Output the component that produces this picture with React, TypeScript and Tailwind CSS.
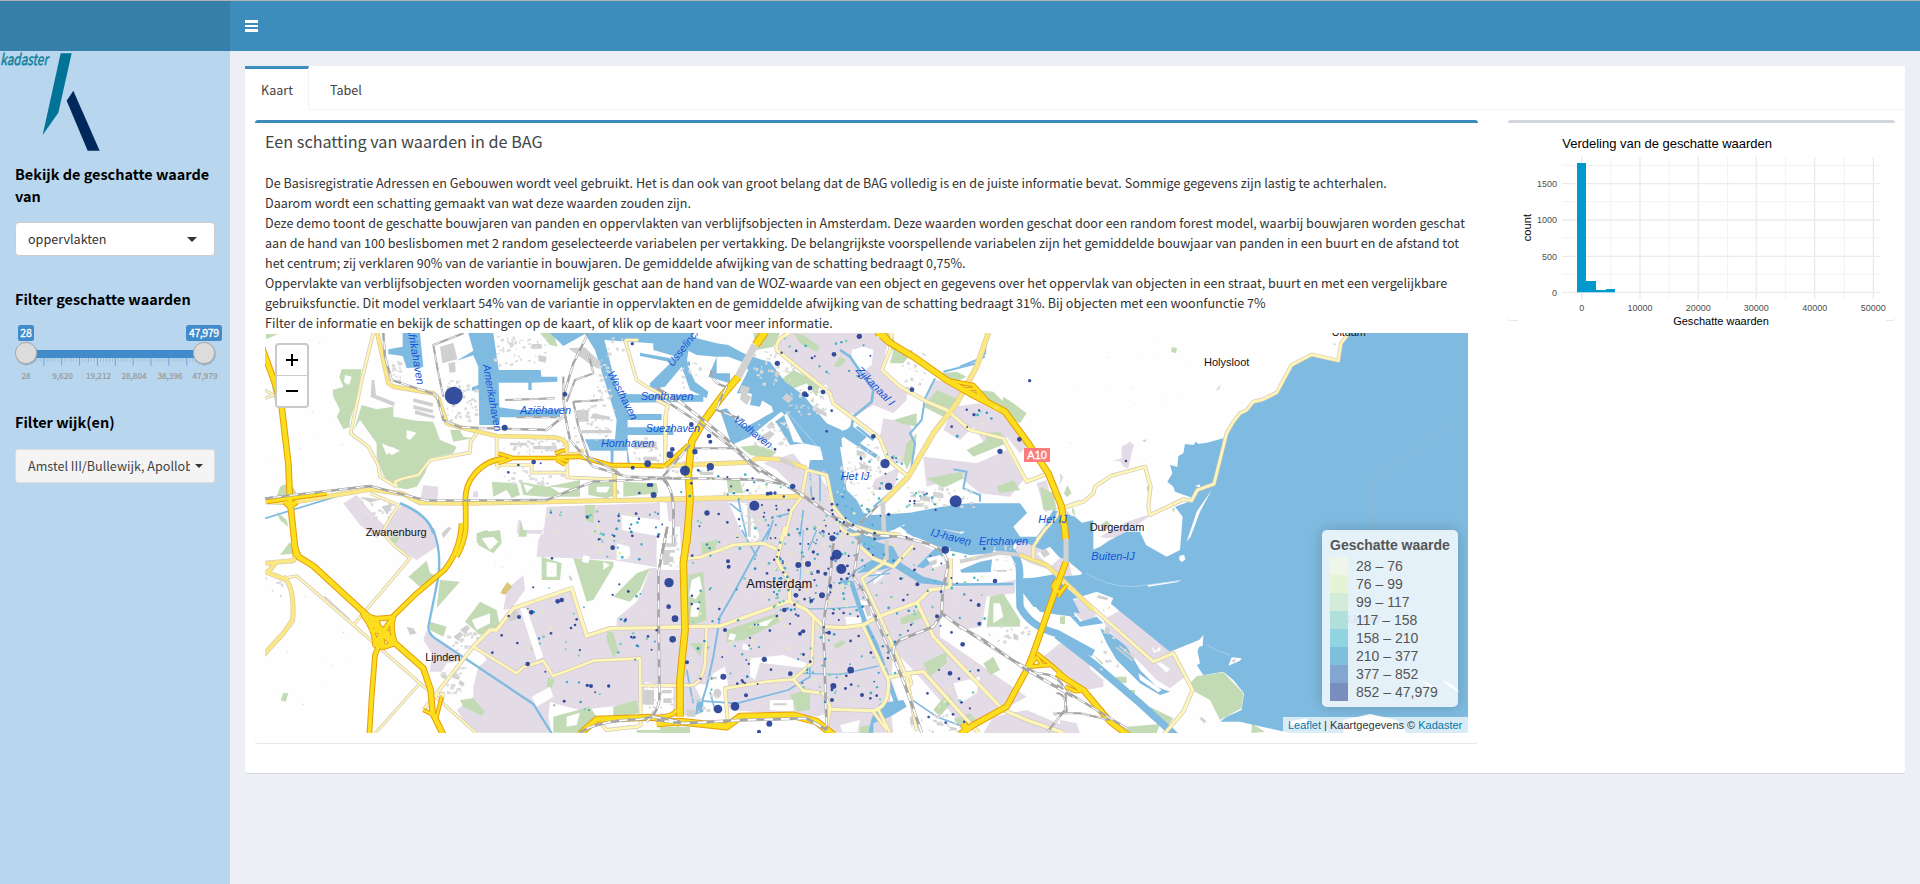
import React from 'react';

type Road = [string, number];
type Tile = {
  x: number;
  y: number;
  urban?: string;
  green?: string;
  water?: string;
  land?: string;
  canals?: Road[];
  minor?: Road[];
  main?: Road[];
  motorway?: Road[];
  rail?: Road[];
  blocks?: string;
  dots?: number[][];
};

// The map is split in tiles; every path is written in its tile's own units (3 per pixel).
const tiles: Tile[] = [
  {
    x: 0, y: 0,
    urban: 'M250 520L290 495 345 560 380 592 350 625 300 585Z M395 560L430 520 470 540 525 600 530 650 470 690 390 640 360 600Z M490 465L535 470 532 512 480 512Z M640 485l14-3v20h-16Z M860 530L1300 515 1300 730 1060 690 830 680 835 630 855 590 775 570 770 610 850 612Z',
    green: 'M245 118L305 118 300 150 290 210 270 270 268 292 250 298 230 260 240 240 220 200 218 180 250 170 238 140Z M305 225L350 238 400 230 400 260 470 272 520 275 540 330 590 350 580 370 510 385 495 430 470 470 440 478 400 470 370 435 350 380 350 340 300 270 282 300Z M570 300L600 300 610 320 640 325 580 335Z M840 9L880 9 893 50 870 45Z M695 455L770 460 780 495 755 505 740 480 700 500Z M780 455L860 470 960 450 960 500 850 500 790 495Z M985 460L1060 455 1080 490 1040 505 985 495Z M1090 455L1190 460 1195 490 1090 500Z M60 470L90 455 110 490 50 500Z M50 545L80 570 85 590 60 570Z M650 610L680 600 720 630 650 640Z M18 12l36 0-36 16Z M35 165l30 50 0 20-20-20Z M975 525L1005 525 1000 580 975 570Z M785 560L800 530 800 620 775 620Z',
    water: 'M428 9L480 9 490 112 440 114 428 78 385 72 385 58 428 50Z M625 9L700 9 716 120 842 120 844 140 892 140 892 155 815 158 815 180 805 180 805 158 716 158 718 232 780 240 900 238 900 262 720 262 718 285 658 285 656 180 635 182 636 172 655 165 655 110 640 76 590 92 640 62Z M870 9L1300 9 1300 60 1250 45 1033 30 1075 192 1330 195 1330 215 1100 218 1103 252 1205 252 1205 270 1103 270 1103 292 1240 292 1240 315 1103 315 1103 362 1110 405 1103 405 1100 362 1061 362 1060 400 1052 400 1052 362 990 362 975 328 1065 328 1070 270 1005 60 975 12 910 48Z M1140 68L1290 95 1290 108 1140 78Z M1240 90L1270 100 1205 170 1185 160Z',
    land: 'M440 300l30 8-20 22-10-5Z M395 350l25 12-25 14-10-10Z M255 135l20 5-8 25-15-8Z M365 340l35 15-20 20Z M790 462l30 8-20 18Z M870 470l60 5-30 14Z M1010 470l40 0-10 18-30-2Z M1085 555L1240 575 1235 625 1085 600Z M775 535L820 530 855 560 850 600 790 600Z',
    canals: [['M15 565L260 490', 5], ['M420 520C470 540 510 570 520 610', 8]],
    blocks: 'M540 50l40-12 12 50-45 12Z M565 100l20-5 2 30-18 4Z M335 150l8 0 5 45 56 22-2 12-70-28Z M460 205l60 15-2 10-58-14Z M460 225l60 15-2 10-58-14Z M465 240l60 18-2 8-58-14Z M950 240h36v35h-36Z M1000 250l50 10v10l-60-5Z M925 55l50-3 20 20 28 25-6 20-20-10Z M815 42h30v14h-30Z M835 75l25 5-3 18-22-5Z M965 300h90v10h-90Z M750 338h50v8h-50Z M820 348h70v10h-70Z M1120 330l70 5v20h-70Z M365 530l35-10-18 35Z M1150 380h40v12h-40Z M300 500l60 8-30 10Z',
    minor: [
      ['M340 9L305 150 272 310 325 350 355 405 360 440 410 470', 7],
      ['M410 470L405 455 430 445 475 435 510 390 630 368 632 335 650 310', 7],
      ['M15 205l25-10-25-15', 5],
      ['M710 320V410M710 415L720 405H815V428H920V442L1060 448M922 395V440', 7],
      ['M1095 30L1130 150 1160 170 1240 210', 7],
      ['M1095 30H1135', 7],
      ['M330 490L415 525 370 600 385 630', 6],
      ['M1225 225L1215 260V405', 7],
    ],
    main: [
      ['M352 9L385 160 400 170 520 190 535 205 560 280 600 292 710 318 880 322Q915 325 920 345V400', 10],
      ['M922 372H950L970 360', 9],
      ['M15 515L90 518 330 478 430 492 480 518 620 520 1260 508 1640 498', 11],
      ['M1064 405V508', 10],
    ],
    motorway: [
      ['M5 50L45 160 65 230 85 400 90 510 108 680', 17],
      ['M20 515L90 505 200 490', 12],
      ['M75 515L90 530 110 515', 16],
      ['M735 385Q680 390 645 430 T617 530 V600 Q612 640 590 680', 14],
      ['M715 370L760 384H890L925 395M715 400L760 384M885 370L915 360M890 390L915 405', 10],
      ['M890 382L960 380 1050 405 1210 408', 12],
    ],
    rail: [
      ['M370 9L375 80 395 150 530 195 550 270 600 292 860 300 915 255 910 200 940 100 985 9', 6],
      ['M610 10L520 45 535 130 550 200', 5],
      ['M735 210L885 205M770 262L890 262M910 210V140M920 215L945 150 1000 130 985 70M940 215L1030 210', 5],
      ['M915 255L930 330 1000 410 1100 440 1260 445', 6],
      ['M15 505L330 468 500 512 860 510 1000 455 1210 445', 6],
      ['M940 215L955 290 985 380 1080 430', 5],
      ['M1210 445Q1240 470 1240 560', 6],
    ],
    dots: [[581, 197, 27], [734, 293, 9], [915, 193, 7], [821, 396, 7], [1163, 401, 10], [1118, 413, 6], [1181, 495, 9], [1166, 465, 6], [1174, 465, 6], [1230, 374, 10], [1237, 358, 7], [1117, 41, 5], [1138, 489, 4], [775, 405, 4], [745, 427, 4], [842, 400, 3]],
  },
  {
    x: 1200, y: 0,
    urban: 'M-10 505L300 505 420 500 400 470 350 420 310 400 400 370 440 420 480 440 500 470 515 540 560 590 640 630 640 700-10 700Z M370 9L690 9 665 120 740 180 740 210 700 250 640 225 590 255 530 235 515 205 500 165 460 160 400 110 350 65 350 50Z M670 265L750 280 760 320 730 400 700 400 680 360 660 320Z M825 150L880 160 920 185 900 200 860 245 790 215 810 165Z M880 230L960 220 1040 260 1100 350 1080 370 1040 320 980 350 940 290 900 330 850 300Z M790 380L950 400 1040 360 1090 450 1050 500 960 490 900 440 800 470Z M640 450L720 410 700 480 640 480Z M1130 460l30-10 20 90-25 5Z',
    green: 'M280 9L360 9 340 50 290 60Z M400 9L430 15 480 50 470 65 420 40Z M350 160L400 120 480 160 470 200 440 160 390 180Z M520 110L540 80 560 90 540 110Z M700 60L760 60 730 100 690 100Z M790 230L830 180 900 210 850 260 780 225Z M840 130L890 125 920 140 880 160 850 150Z M970 310L1020 305 1040 340 940 380 920 360 980 330Z M800 445L905 425 910 445 850 475Z M700 270L770 250 770 290 720 280Z M740 340L770 310 765 370 740 420 730 390Z M1030 200L1060 220 1100 250 1080 280 1020 250Z M1140 470L1180 490 1190 540 1150 540Z M1010 470L1060 450 1080 480 1020 490Z M960 180l40 5 40 40-10 10-50-30Z M200 445L240 450 250 490 205 490Z M670 9L700 20 710 60 690 60Z M240 350l50-5 60 20-20 20-60-10Z',
    water: 'M-20 9L50 9 170 40 205 45 250 70 300 88 330 95 375 155 430 195 500 280 545 300 545 340 560 430 575 480 610 548 640 555 750 548 900 520 1080 520 1110 560 1080 590 1095 610 1150 590 1180 540 1245 560 1290 600 1290 720 1100 640 1040 640 1030 600 900 605 740 580 700 600 650 610 590 590 550 560 520 520 500 430 480 440 445 420 450 390 490 390 480 350 430 340 400 335 370 250 270 190 230 190 265 120 245 95 205 80 170 80 170 130 210 130 210 160 145 140 170 80 110 75 85 62 80 100 105 155 145 185 140 205 90 180 65 110 15 170-30 180-30 160 50 80-20 60Z M230 190L265 130 280 140 265 190Z M280 175L315 185 300 230 270 225Z M335 230L370 240 270 320 215 345 180 240 200 235 235 280 260 290 340 245Z M350 280L390 345 430 340 380 250 345 275Z M540 305L580 290 620 320 600 340 560 325Z M560 600L620 570 720 620 600 640Z M720 590L760 580 920 615 900 640 760 620Z',
    land: 'M575 60L610 50 640 60 635 105 610 125 575 90Z M540 350L620 370 660 400 640 460 600 520 560 480Z M740 500L900 460 960 490 960 515 880 525 750 540Z M1060 590L1120 530 1160 580 1130 620 1080 620Z M0 512L20 520 30 620 0 625Z M205 515L260 520 300 620 280 640 250 620Z',
    canals: [
      ['M540 60L570 80 640 180 635 215 580 260 575 290 540 325', 8],
      ['M545 310L650 380', 12], ['M590 290L640 330', 8],
      ['M980 9L975 70 950 100 850 125M975 80L950 90 900 110', 6],
      ['M825 145L795 205 785 270 750 310 765 340 750 440 640 530', 6],
      ['M880 418L920 425 910 475 960 495V515', 6],
      ['M450 430L455 510M480 440V520M430 540L420 620M235 510L260 620M210 520L240 545M340 570L320 630', 5],
      ['M350 560L390 550', 5],
    ],
    blocks: 'M245 165l25 8-8 20-25-8Z M245 185l30 15-15 25-20-18Z M760 520h30v10h-30Z M780 495l30 6v14l-30-4Z M820 485l30 6v14l-30-4Z M590 360l24 6v14l-24-4Z M600 400l25 6v14l-25-4Z M300 320l30-18 14 10-30 30Z M320 290l14-16 10 10-14 14Z M380 190l20 15-14 15-20-15Z M262 530h10v90h-8Z M470 230l30 20v10l-40-18Z M120 425h40v10h-40Z M350 120l10 8-8 16-10-8Z M740 170l20 10-14 14-14-10Z',
    minor: [
      ['M390 9Q345 25 350 60L510 190 520 220 660 325 685 390 745 440', 9],
      ['M665 120L720 170 800 215 860 240 930 300 1030 325 1100 455 1165 430', 9],
      ['M665 120L690 60 695 9', 8],
      ['M440 420L500 435 520 530 560 580 640 605 720 615', 8],
      ['M440 420L425 500 395 540 375 620', 8],
      ['M20 225L15 405M20 225L-10 210', 7],
      ['M1130 630L1190 560 1200 535 1260 515', 6],
    ],
    main: [
      ['M985 9L950 110 890 220 820 310 745 440 670 515', 13],
      ['M-10 408L270 397 290 385 360 388 440 415', 11],
      ['M-5 508L200 503 420 500', 11],
      ['M1165 430L1200 520', 10],
    ],
    motorway: [
      ['M316 5L287 45', 22],
      ['M235 140L185 200 130 275 95 335 85 430 90 510 80 640', 20],
      ['M15 408L85 345', 11],
      ['M650 5L685 35 760 80 860 150 930 190 1035 245 1105 340 1165 430 1205 530 1218 630', 18],
      ['M670 9l25 30M900 180L950 175 960 205M860 150L940 165 985 215', 11],
    ],
    rail: [
      ['M-10 175L60 215 180 310 300 420 420 490 520 560 640 620', 8],
      ['M-10 195L120 280 250 380 340 440 460 520', 6],
      ['M100 355H220L300 430', 5],
      ['M-10 445L130 445 300 450 380 465', 6],
      ['M10 450Q45 480 40 560V640', 6],
      ['M155 120Q150 160 200 170L180 210 170 240 250 270', 6],
      ['M600 580L660 520', 6],
      ['M90 345L0 450', 6],
    ],
    dots: [[598, 19, 8], [522, 73, 7], [456, 84, 4], [352, 100, 8], [450, 174, 7], [489, 186, 7], [434, 192, 8], [440, 196, 6], [756, 179, 7], [942, 254, 5], [1109, 152, 5], [1078, 328, 7], [1020, 364, 8], [640, 319, 7], [675, 401, 14], [686, 469, 11], [887, 514, 18], [283, 527, 15], [141, 549, 8], [75, 422, 15], [151, 410, 11], [147, 318, 7], [151, 335, 6], [105, 365, 8], [94, 283, 7], [398, 469, 8], [323, 491, 6], [332, 490, 6], [345, 489, 5], [202, 577, 4], [176, 552, 4], [686, 553, 5], [603, 386, 4], [115, 421, 4], [552, 577, 4], [500, 304, 4], [515, 242, 4], [345, 358, 4], [875, 290, 4]],
  },
  {
    x: 2400, y: 0,
    urban: 'M185 350L210 335 222 345 215 370 205 415 190 410 180 393 158 393 185 385Z M200 575L262 555 265 562 210 600 180 620 140 625 120 620Z M0 430l10 10-10 25Z M0 535l20 5 28 35-30 0Z',
    green: 'M335 52l16 2-3 16-14-4Z M470 178l12-14-4 12-10 6Z M12 490L22 465 35 490 20 502Z M120 585L140 572 155 585 130 605Z M245 332l14-4-2 8Z M335 535l10 0-4 14Z M35 530l8 10 2 20-8-12Z M260 470l8-5 0 18-6 2Z M780 74l10 0-6 5Z M820 38l8 5-6 4Z',
    water: 'M864 9L1224 9 1224 1209 690 1209 540 1175 480 1175 500 1160 545 1140 552 1090 520 1050 490 1025 430 1035 400 990 430 925 330 965 175 840 110 785 30 810 45 860 0 855-60 845-110 790-115 745 0 740 60 735 68 730 20 690 0 680 0 590 25 610 85 665 120 650 150 630 200 605 240 605 258 645 320 680 360 660 368 560 345 530 395 512 412 480 462 462 500 310 540 250 580 215 650 188 695 105 755 74 835 92 843 40Z M490 325L440 338 415 342 408 335 400 345 375 342 370 370 355 378 352 410 330 405 337 430 322 455 340 470 345 485 400 505 412 480 462 462Z',
    land: 'M455 480L410 545 380 635 392 620 420 545Z M405 468l15-5 0 10Z',
    minor: [
      ['M-10 540L70 515 100 490 105 470 155 437 255 410 272 470 265 530 270 555 370 508 395 512 412 480 462 462 500 310 520 275 540 250 560 240 580 215 605 210 650 188 695 105 755 74 835 92 843 40 865 12', 8],
    ],
    dots: [[198, 393, 4]],
  },
  {
    x: 0, y: 600,
    urban: 'M490 330L500 300 520 325 620 390 560 400 545 425 510 425 515 370Z M640 470L655 410 680 390 650 345 700 300 760 240 940 175 980 318 1070 300 1070 265 1130 215 1150 170 1170 115 1240 110 1240 530 1140 520 960 540 900 525 870 515 865 560 875 608 640 608 590 540 640 500Z M740 180L790 135 795 180 755 235 730 240Z',
    green: 'M445 140L500 92 510 130 540 140 480 170Z M540 150L600 155 560 200 530 235Z M510 275L560 290 550 320 510 300Z M615 275L660 215 710 240 720 290 660 315Z M600 510L640 505 675 545 665 558 610 530Z M60 75L90 35 110 70Z M70 488l15 2-8 25-15-4Z M940 85L1060 95 1060 110 1000 210 980 215Z M1060 200L1130 130 1170 115 1140 180 1110 215Z M1040 300L1060 310 1075 360 1060 385 1040 330Z M880 560L990 530 1010 560 960 608 880 608Z M1060 530L1130 510 1140 550 1060 560Z M845 80L905 100 900 150 845 150Z M650 10L720 0 725 40 700 70 655 45Z M1130 600h120v8h-120Z M820 340l10-8-6 30-14-2Z M865 440l20 10-10 25-15-5Z M395 20l25 0-10 20-20-5Z',
    land: 'M635 270L690 250 690 280 650 300Z M665 25L700 20 715 35 690 60Z M920 560L960 548 950 585 920 590Z M780 235L800 235 850 380 830 390Z M1070 40L1110 50 1110 85 1070 90Z M1155 455L1240 475 1240 550 1150 550Z M815 500L870 470 880 500 830 530Z M1030 95l20 10-20 15Z M970 75l20 5-5 20-20-5Z M860 95l30 5v40l-30 0Z M1000 545l40 5-20 15Z',
    canals: [['M518 -5Q545 60 535 140L505 290Q505 310 525 325L820 522 875 610', 7]],
    blocks: 'M440 290l20 5 10 15-20 5Z M580 320l20-15 10 8-15 20Z M600 300l20-15 10 8-15 20Z M580 430l20 10-5 10-20-8Z M600 450l14 10-5 10-14-8Z M1150 480h32v44h-32Z M740 255l30-15 10 20-30 15Z M930 135l8 14-6 4-6-12Z M1210 60l20 5-2 40-18 0Z M545 10l20-20 10 5-25 30Z M195 198l75 68-3 3-76-68Z M545 430l16 6-4 12-14-6Z',
    minor: [
      ['M370 10L400 45 450 85 280 285', 6],
      ['M70 145L110 138 280 285 480 460 650 610', 6],
      ['M480 460L345 610', 5],
      ['M490 540L640 350 770 430 790 412 850 392 880 438 1000 392 1140 385 1142 585Q1135 592 1110 592L1040 600 1015 570', 8],
      ['M640 350L690 300 710 300 760 235 935 175 980 318 1050 295 1260 292', 10],
      ['M1140 467H1260', 7],
      ['M520 500L550 490 545 520', 6],
    ],
    main: [['M15 100L100 92 118 65M15 125L75 148M25 125L50 95M70 140Q105 170 98 270 L70 310 10 375', 11]],
    motorway: [
      ['M100 40L115 80 160 108 320 255 400 335 490 415 512 480 518 550 550 615', 17],
      ['M605 -20Q600 60 555 118L470 190 400 258 375 300 345 375 335 500 328 615', 14],
      ['M310 255L350 266 400 262Q390 290 405 340L370 352 345 345Q345 300 310 255Z M330 275L395 340 M345 340L390 275 M330 300L390 310M350 265L370 350', 14],
      ['M490 540L530 560 545 500', 10],
      ['M960 612L1010 568 1180 562 1260 580', 18],
      ['M1250 540Q1240 560 1190 562', 12],
    ],
    rail: [['M960 608Q1010 572 1140 568L1180 560 1260 575', 7], ['M1222 -10L1195 130 1198 510 Q1195 545 1160 575', 7]],
    dots: [[1058, 53, 7], [1227, 158, 14], [1226, 230, 7], [1245, 266, 10], [1238, 328, 10], [905, 210, 7], [893, 214, 7], [814, 247, 7], [777, 261, 6], [803, 402, 7], [982, 466, 5], [993, 468, 6], [1046, 468, 5], [725, 316, 4], [772, 339, 4], [697, 368, 4], [873, 310, 4], [950, 268, 4], [945, 285, 4], [933, 294, 4], [1097, 269, 4], [1114, 321, 4], [1164, 319, 4], [856, 425, 3], [746, 258, 4], [1123, 322, 4], [876, 85, 4]],
  },
  {
    x: 1200, y: 600,
    urban: 'M-10-10H650L740 20 840 70 870 110 880 170 980 165 1065 150 1065 190 980 200 965 290 900 300 850 250 840 250 840 320 1100 500 1030 540 910 590 760 420 700 360 690 520 700 608 510 608 500 550 470 560 210 540 190 470 100 460 130 520 110 550 0 570Z M1000 560L1100 540 1240 600 1230 610 970 610Z M1150 380L1200 340 1290 380 1290 460 1230 440Z M1110 100L1060 70 1080 20 1130 0 1210 30 1250 190 1200 130Z M860 0L900-5 900 30 880 50Z',
    green: 'M85 135L130 125 140 270 85 290Z M125 40L175 28 165 60 125 72Z M200 300L350 250 360 275 250 330 200 335Z M390 495L450 475 450 540 410 545Z M720 265L780 240 785 265 725 285Z M990 200L1030 190 1080 270 1080 290 980 290Z M790 400L860 365 860 400 810 440Z M970 400L1000 380 1020 420 990 435Z M820 540L860 490 880 510 840 560Z M520 345l25-14 14 8-30 18Z M0 590h90v20h-90Z M600 590l30-5 0 25h-30Z M90 340l40 0-10 40Z M870 570l60-20 20 20-40 20Z',
    water: 'M600 20L700 50 725 100 790 140 870 160 1060 158 1060 166 870 168 780 160 700 110 660 120 590 130 640 90 610 60Z M730-30L800-20 900 15 950-20 1060 0 1060 65 930 75 860 60 740 10Z M900 120L960 95 1035 80 1040 125 905 128Z M1085 150L1200 130 1260 250 1190 240 1120 230 1090 190Z M1180 0L1300-30 1300 170 1210 60Z M660 520L690 515 730 510 740 530 690 560 640 580 640 608 625 608 635 565Z M110 520L130 500 130 545 105 555Z M770 110L830 50 860 70 790 115Z',
    land: 'M-10-10L60-10 65 120-10 120Z M160 430L195 410 205 470 140 520 140 470Z M270 385L370 375 440 400 440 415 300 398 285 450 270 440Z M1130 70L1170 50 1200 85 1170 110Z M800 85L840 75 860 100 820 115Z M600 210L630 215 640 270 610 270Z M555 260L605 260 600 290 560 285Z M880 460L960 440 950 490 900 520Z M1000 60L1060 80 1060 140 990 140Z M970 300L1100 290 1140 340 1090 400 1000 350Z M740 540L880 560 900 608 790 608Z M650 125L680 130 640 165Z M330 510L400 510 400 545 330 540Z M250 340l20 8-8 14-16-6Z M95 150l24-12 8 40-20 30-20-10Z M95 220l24 0-4 40-24 0Z M280 285l60-20-20 24Z M210 310l20 4-10 18-16-4Z M1000 220l20 0 10 40-30 20Z M540 585l60-15-8 36h-44Z',
    canals: [
      ['M330 -5L280 80 215 200 180 260 160 380 140 470 115 550', 6],
      ['M540 155L575 160 595 220 620 290 650 350 685 450 710 520', 14],
      ['M1050 60Q1085 90 1078 150L1080 230Q1110 290 1190 310L1300 370', 22],
      ['M385 200Q400 230 440 235T590 230', 4], ['M430 0L420 150', 3],
      ['M430 430L540 433 655 408', 4], ['M450 410V440L385 480 230 520 110 512', 5],
      ['M750 505L830 560 910 590', 5], ['M80 420L100 520M150 485L165 540', 5],
      ['M590 180L700 110M610 140L690 130', 4], ['M245 0L290 80', 5],
      ['M560 150L590 120 640 90', 5], ['M470 0L445 60 M540 160L575 155', 4],
    ],
    blocks: 'M5 40h30v10h-30Z M5 60h40v8h-40Z M10 80h30v16h-30Z M35 20h14v30h-14Z M140 440h30v8h-30Z M160 490a12 14 0 1 0 24 0a12 14 0 1 0-24 0Z M340 520h40v6h-40Z M1140 65l18-8 12 16-18 10Z M1060 310l14 6v16l-14-6Z M1010 120h30v5h-30Z M810 95l20-8v14l-20 8Z M830 575l20 4v10l-20-4Z M870 590l20 4v8l-20-4Z M820 570h10v6h-10Z M750 560l24 8-4 20-20-6Z M5 480h30v10h-30Z M80 540h26v20h-26Z M10 505h25v14h-25Z M610 225l16 0 8 30-12 5Z M1180 545l10 4v10l-10-4Z',
    minor: [
      ['M60 87L120 82 220 45 310 40 350 58', 9],
      ['M375 -10L350 90 385 150 390 215 440 240 490 290 550 293 610 285 650 262 770 218 810 180 870 172 872 85', 10],
      ['M-10 292L180 288 300 245 390 212', 10],
      ['M140 292L135 400Q125 465 90 466H-10', 8],
      ['M460 265L455 400 400 448 320 455 195 475 205 590', 8],
      ['M400 448L430 482 490 490 510 530 500 590M510 538L640 542Q690 530 685 450L610 290', 9],
      ['M640 545L680 600M655 540L690 608', 8],
      ['M600 50L640 85 700 110 760 45', 9],
      ['M680 80L670 100 605 145 660 260 740 440 770 600', 8],
      ['M685 442L745 430 790 425 955 608', 10],
      ['M770 215L820 320 1030 540 1100 570 1210 608', 10],
      ['M1160 -10L1120 50V85', 7], ['M745 430L755 460 740 470', 7],
      ['M540 -10Q570 30 610 5', 8],
    ],
    main: [['M1080 75L1160 105 1240 180 1300 240', 10]],
    motorway: [
      ['M85 -10L70 100 75 300 60 450 60 560', 20],
      ['M-10 580L60 575 200 590 240 560 400 556 470 575 520 615', 20],
      ['M1215 -15V25M1218 95L1190 170 1120 370 1100 420 1040 530 940 585 900 612', 17],
      ['M1190 150L1178 170 1200 188 1220 165M1130 380L1108 410M1130 370L1180 410 1265 485M1110 410L1170 405M1130 380L1150 410 M1215 470L1250 485', 11],
      ['M910 580L925 605', 20],
    ],
    rail: [
      ['M545 -20L620 15 720 20 800 40 Q860 55 864 110L848 180 845 250 900 290 970 330 1100 420 1240 500', 8],
      ['M845 255L820 290 720 330Q690 350 705 390L740 480 785 608', 8],
      ['M930 310L1040 380 1130 430 Q1210 430 1218 500 L1215 540 1160 608', 6],
      ['M520 40L510 150 490 280 495 450 500 600', 7],
      ['M600 20L580 140 615 190 700 390', 7],
      ['M-10 570L70 580 250 570 440 565 500 600', 8],
      ['M20 0L0 100', 6],
    ],
    dots: [[530, 74, 15], [544, 117, 15], [517, 85, 7], [517, 25, 9], [444, 102, 9], [415, 105, 9], [460, 66, 5], [474, 125, 6], [496, 131, 6], [511, 168, 6], [486, 196, 9], [454, 212, 6], [408, 196, 7], [373, 240, 7], [204, 94, 6], [206, 110, 6], [195, 300, 6], [430, 304, 6], [420, 311, 6], [507, 308, 6], [313, 388, 8], [190, 440, 9], [391, 431, 7], [572, 420, 10], [520, 468, 9], [606, 495, 6], [516, 510, 6], [258, 496, 6], [174, 537, 13], [225, 529, 13], [328, 581, 9], [297, 605, 6], [856, 60, 11], [851, 56, 6], [772, 163, 6], [831, 259, 6], [956, 225, 6], [958, 281, 6], [908, 343, 7], [870, 430, 7], [1005, 153, 7], [81, 397, 6], [722, 146, 4], [973, 56, 4], [684, 384, 4], [596, 318, 4], [955, 421, 4], [879, 553, 4], [806, 561, 4], [857, 578, 4], [650, 497, 4], [631, 505, 4], [232, 461, 4], [246, 451, 4], [333, 419, 4], [321, 130, 4]],
  },
  {
    x: 2400, y: 570,
    urban: 'M25 260L50 235 110 270 105 290 75 310Z M130 300L180 270 330 390 375 470 330 505 290 480 140 325Z M0 370L130 480 130 500 80 510 0 450Z M0 600l50 10 10 30h-60Z',
    green: 'M390 490L410 468 490 457 550 520 545 565 480 600 450 540 395 510Z M270 560L340 595 320 625 280 600Z M200 620L300 612 290 639 200 639Z M170 470L200 470 200 490 160 485Z M0 290l15-2 0 25-15-2Z M575 610L615 635 575 639Z M95 400l35 30-4 4Z M205 510l20 0 0 20-20-6Z M1190 500l12 20-14 4Z M125 260l20-10 5 14-20 10Z',
    water: 'M120 325L150 340 200 380 240 450 290 500 330 515 300 525 240 490 170 420 140 370Z M30 288L50 290 60 305 110 290 130 310 60 320Z',
    land: 'M262 195L365 180 350 187 265 200Z M430 345L428 378 410 380 420 430 380 455 350 410 330 395 410 370Z M505 437L515 412 545 415 540 422Z M358 108l14-4 4 14-10 8-8-6Z M1080 480Q1120 490 1135 520L1110 500Z M850 600L930 582 1010 600 1040 639 850 639Z M110 215L160 235 140 275 95 250Z M235 460L305 510 295 517 240 480Z M290 430l10-4 30 20-10 12Z M275 380l12 14 14-16 0 14-20 6Z M1145 480Q1180 490 1200 520L1170 500Z M680 605L740 595 760 625 690 615Z',
    canals: [['M-10 345L100 430 240 550 350 650', 22]],
    blocks: 'M115 225l30 8-4 8-30-8Z M170 380l50 40-3 4-50-40Z M180 376l45 38-3 4-45-38Z M135 320l14 4v20l-14-4Z M425 590l14 14-6 6-14-14Z M515 420l14-2-8 10Z',
    minor: [['M-10 170L100 265 280 425 340 400 398 510 370 575 310 645', 9]],
    motorway: [['M-10 460L70 510 150 605 210 650', 17], ['M25 505L50 515 80 510', 8], ['M-5 230L15 200 ', 9]],
    rail: [['M-10 495L60 540 200 625', 6], ['M-10 580L60 580 150 600', 5], ['M-10 520Q20 520 20 580', 5]],
    dots: [],
  },
];

// Small deterministic generator for the minor objects.
function rng(seed: number) {
  let s = seed;
  return () => {
    s = (s * 16807) % 2147483647;
    return s / 2147483647;
  };
}

const dotColors = ['#2c8fc0', '#41b6c4', '#7fcdbb', '#e4efb0', '#3a4f9c', '#3e9fc0', '#e4efb0', '#35479a'];
// x, y, width, height, count
const dotZones = [
  [1290, 520, 620, 560, 230], [1540, 600, 240, 240, 90], [1900, 620, 280, 300, 55], [860, 540, 360, 90, 42],
  [800, 760, 360, 220, 26], [1000, 600, 170, 90, 22], [1260, 420, 330, 110, 26], [1640, 480, 120, 160, 20],
  [1940, 470, 100, 70, 18], [2090, 220, 120, 100, 10], [1800, 360, 140, 190, 20], [1640, 980, 230, 140, 30],
  [1560, 20, 330, 130, 22], [2000, 1000, 160, 180, 14], [1080, 860, 120, 130, 12], [880, 1050, 180, 100, 10],
];
const blockZones = [
  [700, 20, 160, 90, 50], [390, 90, 30, 60, 16], [560, 150, 90, 120, 60], [1000, 60, 50, 200, 30], [730, 320, 190, 50, 40],
  [940, 225, 120, 110, 26], [1120, 320, 80, 80, 16], [730, 410, 190, 50, 30], [1480, 60, 120, 100, 34], [1480, 270, 100, 80, 34],
  [1580, 170, 110, 90, 34], [1740, 340, 120, 160, 46], [1950, 470, 190, 60, 40], [1210, 380, 150, 60, 26], [1260, 90, 60, 80, 12],
  [300, 490, 100, 80, 24], [560, 900, 90, 60, 20], [540, 1010, 70, 80, 26], [1440, 520, 60, 110, 24], [1210, 610, 50, 100, 12],
  [2180, 880, 130, 60, 18], [1950, 1150, 180, 60, 30], [1280, 1090, 100, 60, 14], [1160, 1070, 90, 80, 14], [1920, 60, 70, 110, 20],
  [15, 740, 80, 60, 6], [1640, 420, 70, 100, 26], [2200, 640, 60, 80, 14], [2520, 900, 100, 120, 12], [1390, 440, 120, 50, 16],
  [1040, 20, 60, 40, 8],
];
const sparseZones = [[30, 20, 260, 440, 12], [2420, 20, 560, 380, 14], [30, 780, 380, 380, 12], [700, 620, 240, 110, 10]];

const smallDots: number[][] = [];
dotZones.forEach((z, i) => {
  const r = rng(911 + i * 77);
  for (let k = 0; k < z[4]; k++) {
    smallDots.push([z[0] + r() * z[2], z[1] + r() * z[3], 2.6 + r() * 1.8, Math.floor(r() * dotColors.length)]);
  }
});
const smallBlocks: number[][] = [];
[...blockZones, ...sparseZones].forEach((z, i) => {
  const r = rng(401 + i * 53);
  const grow = i < blockZones.length ? 1 : 0.4;
  for (let k = 0; k < z[4]; k++) {
    smallBlocks.push([z[0] + r() * z[2], z[1] + r() * z[3], (3 + r() * 9) * grow, (3 + r() * 7) * grow, (i % 5) * 9 - 18]);
  }
});

function Shapes({ layer, fill }: { layer: 'urban' | 'green' | 'water' | 'land' | 'blocks'; fill: string }) {
  return (
    <g fill={fill}>
      {tiles.map((t, i) => (t[layer] ? <path key={i} transform={`translate(${t.x} ${t.y})`} d={t[layer]} /> : null))}
    </g>
  );
}

function Lines({ layer, color, extra, dash }: { layer: 'canals' | 'minor' | 'main' | 'motorway' | 'rail'; color: string; extra: number; dash?: string }) {
  return (
    <g fill="none" stroke={color} strokeLinejoin="round">
      {tiles.map((t, i) => (
        <g key={i} transform={`translate(${t.x} ${t.y})`}>
          {(t[layer] || []).map(([d, w], j) => (
            <path key={j} d={d} strokeWidth={w + extra} strokeDasharray={dash} />
          ))}
        </g>
      ))}
    </g>
  );
}

const waterNames: [string, number, number, number, number][] = [
  ['Afrikahaven', 441, -8, 80, 176],
  ['Amerikahaven', 668, 105, 80, 204],
  ['Aziëhaven', 780, 253, 0, 153],
  ['Westhaven', 1042, 130, 63, 160],
  ['Sonthaven', 1142, 210, 0, 158],
  ['Suezhaven', 1157, 307, 0, 163],
  ['Hornhaven', 1023, 351, 0, 160],
  ['Usselincxhaven', 1238, 112, -52, 222],
  ['Vlothaven', 1418, 272, 38, 138],
  ['Zijkanaal I', 1786, 122, 46, 150],
  ['Het IJ', 1742, 451, 0, 86],
  ['Het IJ', 2335, 579, 0, 86],
  ['IJ-haven', 2010, 617, 14, 124],
  ['Ertshaven', 2157, 646, 0, 147],
  ['Buiten-IJ', 2494, 690, 0, 130],
  ['IJmeer', 3262, 880, 0, 100],
];
const placeNames: [string, number, number, number, number][] = [
  ['Zwanenburg', 317, 618, 183, 33],
  ['Lijnden', 496, 992, 105, 33],
  ['Amsterdam', 1459, 775, 198, 37],
  ['Holysloot', 2832, 109, 136, 33],
  ['Durgerdam', 2489, 603, 164, 33],
  ['Uitdam', 3215, 18, 102, 33],
];

function CityMap() {
  return (
    <svg className="block h-[400px] w-[1203px]" viewBox="15 9 3609 1200" fontFamily="'Liberation Sans', Arial, sans-serif">
      <rect x="15" y="9" width="3609" height="1200" fill="#fefefe" />
      <Shapes layer="urban" fill="#e3dbe6" />
      <Shapes layer="green" fill="#c3dbb5" />
      <Shapes layer="water" fill="#7fbbe1" />
      <Shapes layer="land" fill="#fefefe" />
      <Lines layer="canals" color="#7fbbe1" extra={0} />
      <Shapes layer="blocks" fill="#d0d0d0" />
      <g fill="#dadada">
        {smallBlocks.map(([x, y, w, h, a], i) => (
          <rect key={i} x={x} y={y} width={w} height={h} transform={`rotate(${a} ${x} ${y})`} />
        ))}
      </g>
      <path d="M985 680l15-22 15 14-22 24-14-4Z" transform="translate(-258 98)" fill="#dcc67c" />
      <path d="M3624 245L3342 450V600" fill="none" stroke="#a9b4bd" strokeWidth="2" strokeDasharray="14 6" />
      <path d="M2480 730Q2540 770 2620 770L2760 752M2840 945Q2870 965 2910 975" fill="none" stroke="#b5d8ee" strokeWidth="2" />
      <path d="M1575 240L1690 370" stroke="#c4dff0" strokeWidth="2" />
      <Lines layer="minor" color="#d3c5bd" extra={4} />
      <Lines layer="main" color="#d8c9a5" extra={4} />
      <Lines layer="minor" color="#fdf6b6" extra={0} />
      <Lines layer="main" color="#fbe784" extra={0} />
      <Lines layer="motorway" color="#e79c08" extra={3} />
      <Lines layer="motorway" color="#fbdf1e" extra={-3} />
      <g fill="none" stroke="#d2d2d2">
        <path d="M1485 45L1435 140" strokeWidth="22" />
        <path d="M1868 515L1872 605" strokeWidth="14" />
        <path d="M1560 388Q1580 390 1605 412" strokeWidth="11" />
        <path d="M1880 630V690M2100 695L2220 668 2280 675" strokeWidth="12" />
        <path d="M2418 625V695" strokeWidth="15" />
      </g>
      <Lines layer="rail" color="#a3a3a3" extra={1} />
      <Lines layer="rail" color="#ffffff" extra={-2.5} />
      <Lines layer="rail" color="#a3a3a3" extra={-1} dash="24 26" />
      <g>
        {smallDots.map(([x, y, r, c], i) => (
          <circle key={i} cx={x} cy={y} r={r} fill={dotColors[c]} />
        ))}
      </g>
      <g>
        <rect x="2292" y="354" width="78" height="42" fill="#fb7c7c" />
        <text x="2302" y="388" fontSize="32" fill="#fff" stroke="#fff" textLength="59" lengthAdjust="spacingAndGlyphs">A10</text>
      </g>
      <g fontStyle="italic" fontSize="33" fill="#1553d8">
        {waterNames.map(([n, x, y, a, w], i) => (
          <text key={i} x={x} y={y} textLength={w} lengthAdjust="spacingAndGlyphs" transform={`rotate(${a} ${x} ${y})`}>{n}</text>
        ))}
      </g>
      <g fill="#111">
        {placeNames.map(([n, x, y, w, s], i) => (
          <text key={i} x={x} y={y} fontSize={s} textLength={w} lengthAdjust="spacingAndGlyphs">{n}</text>
        ))}
      </g>
      <g fill="#253f96" fillOpacity="0.92">
        {tiles.map((t) => (t.dots || []).map(([x, y, r], i) => <circle key={`${t.x}-${t.y}-${i}`} cx={t.x + x} cy={t.y + y} r={r} />))}
      </g>
    </svg>
  );
}

function Histogram() {
  const major = [305, 480, 655, 829, 1004, 1180];
  return (
    <svg className="block h-[200px] w-[368px] shrink-0 bg-white" viewBox="114 99 1104 600" fontFamily="'Liberation Sans', Arial, sans-serif">
      <g stroke="#f2f2f2" strokeWidth="3">
        {[392, 567, 743, 917, 1093].map((x) => <path key={x} d={`M${x} 171V597`} />)}
        {[196, 305, 414, 523].map((y) => <path key={y} d={`M247 ${y}H1201`} />)}
      </g>
      <g stroke="#ebebeb" strokeWidth="4">
        {major.map((x) => <path key={x} d={`M${x} 171V597`} />)}
        {[251, 360, 469, 577].map((y) => <path key={y} d={`M247 ${y}H1201`} />)}
      </g>
      <path d="M291 577V189H318V543H348V570H378V567H405V577Z" fill="#0099cd" />
      <text x="247" y="144" fontSize="39" fill="#000" textLength="629">Verdeling van de geschatte waarden</text>
      <g fontSize="27" fill="#4d4d4d">
        {['1500', '1000', '500', '0'].map((s, i) => <text key={s} x="231" y={[261, 369, 479, 588][i]} textAnchor="end">{s}</text>)}
        {['0', '10000', '20000', '30000', '40000', '50000'].map((s, i) => (
          <text key={s} x={major[i]} y="633" textAnchor="middle">{s}</text>
        ))}
      </g>
      <text x="723" y="675" fontSize="33" textAnchor="middle" textLength="287">Geschatte waarden</text>
      <text transform="translate(153 383) rotate(-90)" fontSize="33" textAnchor="middle" textLength="82">count</text>
    </svg>
  );
}

function KadasterLogo() {
  return (
    <svg className="block h-[101px] w-[110px]" viewBox="0 153 330 303">
      <text x="1" y="195" fontSize="46" fontStyle="italic" fontFamily="'Noto Sans CJK SC', 'Open Sans', sans-serif" fill="#10809c" stroke="#10809c" strokeWidth="1.5" textLength="143" lengthAdjust="spacingAndGlyphs">kadaster</text>
      <path d="M182 160H215L175 338 128 405Z" fill="#007396" />
      <path d="M220 272L299 452H263L200 302Z" fill="#00285c" />
    </svg>
  );
}

const legend: [string, string][] = [
  ['bg-[#eff6e9]', '28 – 76'],
  ['bg-[#e6f3d5]', '76 – 99'],
  ['bg-[#d3ecda]', '99 – 117'],
  ['bg-[#b0dfdc]', '117 – 158'],
  ['bg-[#91d3e0]', '158 – 210'],
  ['bg-[#7fbedd]', '210 – 377'],
  ['bg-[#83a5d2]', '377 – 852'],
  ['bg-[#7a8dbf]', '852 – 47,979'],
];

const intro = [
  'De Basisregistratie Adressen en Gebouwen wordt veel gebruikt. Het is dan ook van groot belang dat de BAG volledig is en de juiste informatie bevat. Sommige gegevens zijn lastig te achterhalen.',
  'Daarom wordt een schatting gemaakt van wat deze waarden zouden zijn.',
  'Deze demo toont de geschatte bouwjaren van panden en oppervlakten van verblijfsobjecten in Amsterdam. Deze waarden worden geschat door een random forest model, waarbij bouwjaren worden geschat',
  'aan de hand van 100 beslisbomen met 2 random geselecteerde variabelen per vertakking. De belangrijkste voorspellende variabelen zijn het gemiddelde bouwjaar van panden in een buurt en de afstand tot',
  'het centrum; zij verklaren 90% van de variantie in bouwjaren. De gemiddelde afwijking van de schatting bedraagt 0,75%.',
  'Oppervlakte van verblijfsobjecten worden voornamelijk geschat aan de hand van de WOZ-waarde van een object en gegevens over het oppervlak van objecten in een straat, buurt en met een vergelijkbare',
  'gebruiksfunctie. Dit model verklaart 54% van de variantie in oppervlakten en de gemiddelde afwijking van de schatting bedraagt 31%. Bij objecten met een woonfunctie 7%',
  'Filter de informatie en bekijk de schattingen op de kaart, of klik op de kaart voor meer informatie.',
];

function RangeSlider() {
  const ticks = Array.from({ length: 21 }, (_, i) => i);
  const labels: [string, number][] = [['28', 26], ['9,620', 62.5], ['19,212', 98.5], ['28,804', 134], ['38,396', 170], ['47,979', 205]];
  return (
    <svg className="block h-[60px] w-[230px]" viewBox="0 325 230 60">
      <rect x="18" y="325" width="16" height="16" rx="2.5" fill="#428bca" />
      <rect x="186" y="325" width="36" height="16" rx="2.5" fill="#428bca" />
      <g fill="#fff" fontSize="10.5" fontFamily="'Noto Sans CJK SC', sans-serif" stroke="#fff" strokeWidth="0.3">
        <text x="26" y="337" textAnchor="middle">28</text>
        <text x="204" y="337" textAnchor="middle" textLength="30">47,979</text>
      </g>
      <rect x="26" y="350" width="178" height="8" fill="#428bca" />
      {ticks.map((i) => {
        const x = 26 + i * 8.93;
        const major = i % 2 === 0;
        return (
          <g key={i}>
            <path d={`M${x} 358V${major ? 365.5 : 362}`} stroke={major ? '#5d9dd6' : '#8fb3d1'} strokeWidth="0.9" />
            <path d={`M${x + 3} 358V362M${x + 6} 358V362`} stroke="#98b5cc" strokeWidth="0.6" opacity={i < 20 ? 1 : 0} />
          </g>
        );
      })}
      <g fill="#999" fontSize="8.2" fontFamily="'Noto Sans CJK SC', sans-serif" stroke="#999" strokeWidth="0.2">
        {labels.map(([s, x]) => <text key={s} x={x} y="379" textAnchor="middle">{s}</text>)}
      </g>
      {[26, 204].map((x) => (
        <g key={x}>
          <circle cx={x + 0.6} cy="354" r="11.2" fill="#7f97aa" opacity="0.5" />
          <circle cx={x} cy="353" r="10.6" fill="#dcdcdc" stroke="#aaa" strokeWidth="1" />
        </g>
      ))}
    </svg>
  );
}

const Caret = ({ className }: { className: string }) => (
  <svg className={className} viewBox="0 0 10 5"><path d="M0 0H10L5 5Z" fill="#333" /></svg>
);

const heading = 'whitespace-nowrap text-[14.45px] font-bold leading-[22px] text-black';

export default function App() {
  return (
    <div className="flex h-[884px] w-[1920px] flex-col overflow-hidden bg-[#ecf0f5] font-['Noto_Sans_CJK_SC','Noto_Sans',sans-serif] text-[12.58px] leading-5 text-[#333]">
      <div className="h-px shrink-0 bg-[#b1b1b1]" />
      <header className="flex h-[50px] shrink-0">
        <div className="w-[230px] bg-[#367fa9]" />
        <div className="flex-1 bg-[#3c8dbc] pl-[15px] pt-[19px]">
          <div className="flex w-[13px] flex-col gap-[2px]">
            <i className="h-[3px] bg-white" />
            <i className="h-[2px] bg-white" />
            <i className="h-[3px] bg-white" />
          </div>
        </div>
      </header>

      <div className="flex min-h-0 flex-1">
        <aside className="flex w-[230px] shrink-0 flex-col bg-[#b8d6ee]">
          <KadasterLogo />
          <div className="mt-[11px] px-[15px]">
            <h4 className={heading}>Bekijk de geschatte waarde<br />van</h4>
            <div className="mt-[15px] flex h-[34px] items-center justify-between rounded-[4px] border border-[#ccc] bg-white pl-3 pr-[17px]">
              <span>oppervlakten</span>
              <Caret className="h-[5px] w-[10px]" />
            </div>
            <h4 className={`mt-[32px] ${heading}`}>Filter geschatte waarden</h4>
          </div>
          <div className="mt-[15px]"><RangeSlider /></div>
          <div className="mt-[26px] px-[15px]">
            <h4 className={heading}>Filter wijk(en)</h4>
            <div className="mt-[16px] flex h-[34px] items-center rounded-[3px] border border-[#ddd] bg-[#f4f4f4] pl-3 text-[#444]">
              <span className="w-[162px] overflow-hidden whitespace-nowrap">Amstel III/Bullewijk, Apollobuurt</span>
              <Caret className="ml-[5px] h-[4px] w-[8px]" />
            </div>
          </div>
        </aside>

        <main className="flex-1 p-[15px]">
          <section className="flex h-[707px] flex-col rounded-b-[3px] bg-white shadow-[0_1px_1px_rgba(0,0,0,0.1)]">
            <nav className="flex h-[44px] shrink-0 border-b border-[#f4f4f4] text-[#444]">
              <div className="h-[44px] w-[64px] border-r border-t-[3px] border-r-[#f4f4f4] border-t-[#3c8dbc] bg-white pl-4 pt-[11px]">Kaart</div>
              <div className="pl-[21px] pt-[14px]">Tabel</div>
            </nav>
            <div className="flex items-start gap-[30px] p-[10px]">
              <article className="h-[623px] w-[1223px] rounded-[3px] border-t-[3px] border-[#3c8dbc] bg-white px-[10px] shadow-[0_1px_1px_rgba(0,0,0,0.1)]">
                <h3 className="flex h-[36px] items-center text-[16.2px] text-[#444]">Een schatting van waarden in de BAG</h3>
                <div className="pt-[14px]">
                  {intro.map((line) => (
                    <p key={line} className="h-5 whitespace-nowrap">{line}</p>
                  ))}
                </div>
                <div className="relative h-[400px] w-[1203px] overflow-hidden font-['Liberation_Sans',Arial,sans-serif]">
                  <CityMap />
                  <div className="absolute left-[10px] top-[10px] w-[34px] rounded-[4px] border-2 border-[#c9c9c9] bg-white">
                    <div className="flex h-[31px] items-center justify-center border-b border-[#ccc]">
                      <svg className="size-3" viewBox="0 0 12 12"><path d="M0 6H12M6 0V12" stroke="#000" strokeWidth="2" /></svg>
                    </div>
                    <div className="flex h-[30px] items-center justify-center">
                      <svg className="size-3" viewBox="0 0 12 12"><path d="M0 6H12" stroke="#000" strokeWidth="2" /></svg>
                    </div>
                  </div>
                  <div className="absolute right-[10px] top-[197px] h-[177px] w-[136px] rounded-[5px] bg-white/80 px-2 pt-[6px] text-[14px] leading-[18px] text-[#555] shadow-[0_0_15px_rgba(0,0,0,0.2)]">
                    <div className="mb-[3px] whitespace-nowrap font-bold">Geschatte waarde</div>
                    {legend.map(([color, label]) => (
                      <div key={label} className="flex h-[18px] gap-2">
                        <i className={`w-[18px] ${color}`} />
                        <span className="whitespace-nowrap">{label}</span>
                      </div>
                    ))}
                  </div>
                  <div className="absolute bottom-0 right-0 h-4 w-[185px] whitespace-nowrap bg-white/70 pl-[5px] text-[11px] leading-4 text-[#333]">
                    <span className="text-[#0078a8]">Leaflet</span> | Kaartgegevens © <span className="text-[#0078a8]">Kadaster</span>
                  </div>
                </div>
              </article>
              <article className="h-[200px] w-[387px] rounded-[3px] border-t-[3px] border-[#d2d6de] bg-white pl-[10px] pt-[10px] shadow-[0_1px_1px_rgba(0,0,0,0.1)]">
                <Histogram />
              </article>
            </div>
          </section>
        </main>
      </div>
    </div>
  );
}
